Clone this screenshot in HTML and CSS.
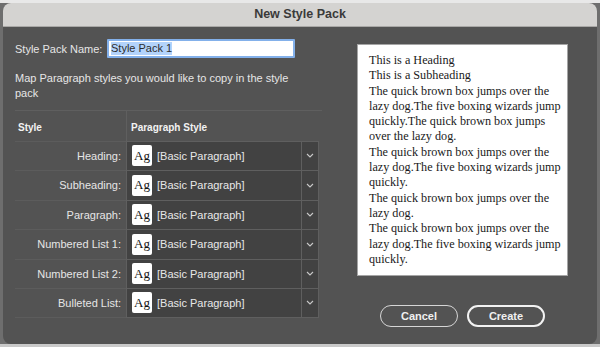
FILE: index.html
```html
<!DOCTYPE html>
<html>
<head>
<meta charset="utf-8">
<link rel="stylesheet" href="styles.css">
</head>
<body>
<div class="dialog">
  <div class="titlebar">New Style Pack</div>
  <div class="content">
    <div class="left">
      <div class="name-row">
        <span class="name-label">Style Pack Name:</span>
        <div class="name-input"><span class="sel">Style Pack 1</span></div>
      </div>
      <p class="desc">Map Paragraph styles you would like to copy in the style pack</p>
      <div class="table">
        <div class="th th-style">Style</div>
        <div class="th th-para">Paragraph Style</div>

        <div class="label">Heading:</div>
        <div class="combo"><span class="ag">Ag</span><span class="cv">[Basic Paragraph]</span><span class="dd"><svg width="8" height="5" viewBox="0 0 8 5"><path d="M1 1l3 3 3-3" fill="none" stroke="#c8c8c8" stroke-width="1.1"/></svg></span></div>

        <div class="label">Subheading:</div>
        <div class="combo"><span class="ag">Ag</span><span class="cv">[Basic Paragraph]</span><span class="dd"><svg width="8" height="5" viewBox="0 0 8 5"><path d="M1 1l3 3 3-3" fill="none" stroke="#c8c8c8" stroke-width="1.1"/></svg></span></div>

        <div class="label">Paragraph:</div>
        <div class="combo"><span class="ag">Ag</span><span class="cv">[Basic Paragraph]</span><span class="dd"><svg width="8" height="5" viewBox="0 0 8 5"><path d="M1 1l3 3 3-3" fill="none" stroke="#c8c8c8" stroke-width="1.1"/></svg></span></div>

        <div class="label">Numbered List 1:</div>
        <div class="combo"><span class="ag">Ag</span><span class="cv">[Basic Paragraph]</span><span class="dd"><svg width="8" height="5" viewBox="0 0 8 5"><path d="M1 1l3 3 3-3" fill="none" stroke="#c8c8c8" stroke-width="1.1"/></svg></span></div>

        <div class="label">Numbered List 2:</div>
        <div class="combo"><span class="ag">Ag</span><span class="cv">[Basic Paragraph]</span><span class="dd"><svg width="8" height="5" viewBox="0 0 8 5"><path d="M1 1l3 3 3-3" fill="none" stroke="#c8c8c8" stroke-width="1.1"/></svg></span></div>

        <div class="label last">Bulleted List:</div>
        <div class="combo"><span class="ag">Ag</span><span class="cv">[Basic Paragraph]</span><span class="dd"><svg width="8" height="5" viewBox="0 0 8 5"><path d="M1 1l3 3 3-3" fill="none" stroke="#c8c8c8" stroke-width="1.1"/></svg></span></div>
      </div>
    </div>
    <div class="right">
      <div class="preview">
        <p>This is a Heading</p>
        <p>This is a Subheading</p>
        <p>The quick brown box jumps over the<br>lazy dog.The five boxing wizards jump<br>quickly.The quick brown box jumps<br>over the lazy dog.</p>
        <p>The quick brown box jumps over the<br>lazy dog.The five boxing wizards jump<br>quickly.</p>
        <p>The quick brown box jumps over the<br>lazy dog.</p>
        <p>The quick brown box jumps over the<br>lazy dog.The five boxing wizards jump<br>quickly.</p>
      </div>
      <div class="buttons">
        <button class="btn">Cancel</button>
        <button class="btn primary">Create</button>
      </div>
    </div>
  </div>
</div>
</body>
</html>
```
FILE: styles.css
```css
html, body {
  margin: 0;
  padding: 0;
}
body {
  width: 600px;
  height: 347px;
  overflow: hidden;
  background: linear-gradient(to bottom, #e8e8e8 0, #e8e8e8 3px, #6e6e6e 3px, #6e6e6e 344px, #c9c9c9 344px);
  padding: 3px 3px 0 3px;
  box-sizing: border-box;
  font-family: "Liberation Sans", Arial, sans-serif;
}
.dialog {
  width: 594px;
  height: 341px;
  border-radius: 8px;
  overflow: hidden;
  background: #535353;
  display: flex;
  flex-direction: column;
}
.titlebar {
  height: 23px;
  flex: none;
  background: #d4d3d1;
  border-bottom: 1px solid #a9a8a6;
  color: #3a3a3a;
  font-weight: bold;
  font-size: 12.5px;
  text-align: center;
  line-height: 23px;
}
.content {
  flex: 1;
  display: flex;
}
.left {
  width: 307px;
  margin-left: 12px;
  display: flex;
  flex-direction: column;
}
.name-row {
  margin-top: 13px;
  display: flex;
  align-items: center;
  height: 17px;
}
.name-label {
  color: #e6e6e6;
  font-size: 11px;
  width: 92px;
}
.name-input {
  width: 182px;
  height: 15px;
  background: #fff;
  border: 2px solid #83b0ea;
  border-radius: 1px;
  display: flex;
  align-items: center;
  padding-left: 2px;
  font-size: 11px;
  color: #2d2d2d;
}
.sel {
  background: #b3d3fb;
  line-height: 13px;
}
.desc {
  margin: 14px 0 0 0;
  font-size: 11px;
  line-height: 15px;
  color: #e6e6e6;
  padding-right: 10px;
}
.table {
  margin-top: 9px;
  display: grid;
  grid-template-columns: 111px 193px;
  grid-auto-rows: 29.5px;
  border-top: 1px solid #5f5f5f;
}
.th {
  font-size: 10px;
  font-weight: bold;
  color: #f2f2f2;
  padding-top: 11px;
  box-sizing: border-box;
}
.th-style {
  padding-left: 3px;
}
.th-para {
  border-left: 1px solid #5f5f5f;
  padding-left: 4px;
}
.label {
  border-top: 1px solid #5c5c5c;
  color: #e6e6e6;
  font-size: 11px;
  text-align: right;
  padding-right: 5px;
  display: flex;
  align-items: center;
  justify-content: flex-end;
}
.label.last {
  border-bottom: 1px solid #5c5c5c;
}
.combo {
  background: #424242;
  border: 1px solid #5f5f5f;
  border-bottom: none;
  display: flex;
  align-items: center;
  box-sizing: border-box;
}
.combo:last-child {
  border-bottom: 1px solid #5f5f5f;
}
.ag {
  width: 20px;
  height: 21px;
  margin-left: 5px;
  background: #fff;
  border-radius: 2px;
  color: #111;
  font-family: "Liberation Serif", "Times New Roman", serif;
  font-size: 13px;
  display: flex;
  align-items: center;
  justify-content: center;
}
.cv {
  flex: 1;
  margin-left: 5px;
  color: #e8e8e8;
  font-size: 11px;
}
.dd {
  width: 16px;
  align-self: stretch;
  border-left: 1px solid #5f5f5f;
  display: flex;
  align-items: center;
  justify-content: center;
}
.right {
  margin-left: 35px;
  display: flex;
  flex-direction: column;
}
.preview {
  margin-top: 17px;
  width: 211px;
  height: 232px;
  box-sizing: border-box;
  background: #fff;
  border: 1px solid #a5a5a5;
  padding: 8px 0 0 11px;
  font-family: "Liberation Serif", "Times New Roman", serif;
  font-size: 12.2px;
  line-height: 15.3px;
  color: #1a1a1a;
}
.preview p {
  margin: 0;
  white-space: nowrap;
}
.buttons {
  margin-top: 29px;
  margin-left: 23px;
  display: flex;
  gap: 9px;
}
.btn {
  width: 78px;
  height: 22px;
  border-radius: 11px;
  border: 1.5px solid #d6d6d6;
  background: transparent;
  color: #f0f0f0;
  font-family: "Liberation Sans", Arial, sans-serif;
  font-size: 11px;
  font-weight: bold;
  padding: 0;
}
.btn.primary {
  border: 2px solid #f2f2f2;
}
```
